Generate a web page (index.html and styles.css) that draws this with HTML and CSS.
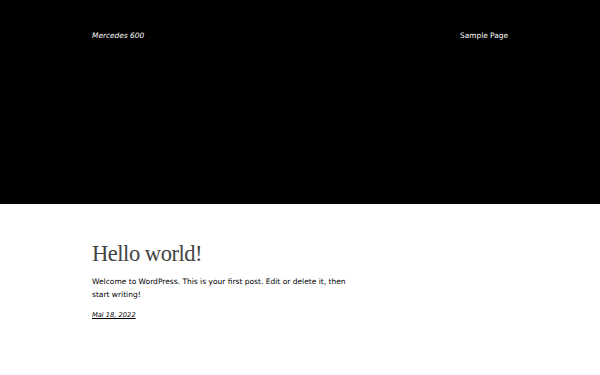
FILE: index.html
```html
<!DOCTYPE html>
<html lang="en">
<head>
  <meta charset="utf-8">
  <title>Mercedes 600</title>
  <link rel="stylesheet" href="styles.css">
</head>
<body>
  <header class="site-header">
    <div class="header-inner">
      <a class="site-title" href="#">Mercedes 600</a>
      <nav class="site-nav">
        <a href="#">Sample Page</a>
      </nav>
    </div>
  </header>

  <main class="site-main">
    <article class="post">
      <h2 class="post-title">Hello world!</h2>
      <p class="post-excerpt">Welcome to WordPress. This is your first post. Edit or delete it, then start writing!</p>
      <div class="post-meta">
        <a class="post-date" href="#">Mai 18, 2022</a>
      </div>
    </article>
  </main>
</body>
</html>
```

FILE: styles.css
```css
* {
  margin: 0;
  padding: 0;
  box-sizing: border-box;
}

html,
body {
  width: 100%;
  height: 100%;
  background: #fff;
  font-family: "DejaVu Sans", sans-serif;
  color: #000;
}

a {
  color: inherit;
}

.site-header {
  background: #000;
  color: #fff;
  height: 204px;
  padding: 31px 92px 0;
}

.header-inner {
  display: flex;
  justify-content: space-between;
  align-items: center;
  font-size: 7.4px;
}

.site-title {
  font-style: italic;
  text-decoration: none;
}

.site-nav a {
  text-decoration: none;
}

.site-main {
  padding: 36px 92px 0;
}

.post {
  max-width: 262px;
}

.post-title {
  font-family: "Liberation Serif", serif;
  font-weight: normal;
  font-size: 22.6px;
  line-height: 27.6px;
  letter-spacing: -0.5px;
  color: #444;
  margin-bottom: 8.6px;
}

.post-excerpt {
  font-size: 7.5px;
  line-height: 12.4px;
  margin-bottom: 8.7px;
}

.post-meta {
  font-size: 6.7px;
  line-height: 10px;
}

.post-date {
  font-style: italic;
  text-decoration: underline;
}
```
